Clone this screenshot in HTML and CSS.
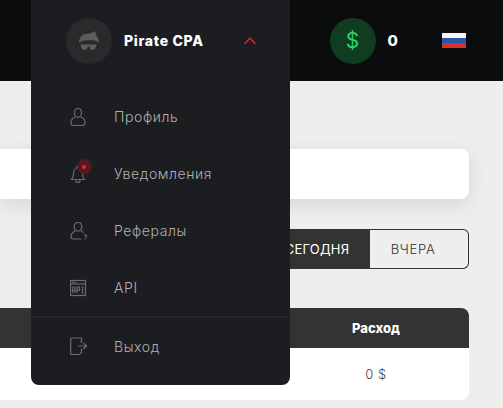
FILE: index.html
```html
<!DOCTYPE html>
<html lang="en">
<head>
    <meta charset="UTF-8">
    <meta name="viewport" content="width=device-width, initial-scale=1.0">
    <title>Pirate CPA</title>
    <link rel="stylesheet" href="styles.css">
</head>
<body>
    <header class="topbar">
        <div class="balance">
            <div class="balance-icon">$</div>
            <span class="balance-value">0</span>
        </div>
        <div class="flag">
            <span class="flag-white"></span>
            <span class="flag-blue"></span>
            <span class="flag-red"></span>
        </div>
    </header>

    <div class="user-menu">
        <div class="user-head">
            <div class="avatar">
                <svg width="24" height="22" viewBox="0 0 24 22">
                    <path fill="#5c5c5e" d="M2 13C2 7 5 4.500 9 4C13 3.500 16 3 18 1C18.500 3 19 4 19 5C21 7 22 10 22 13C21 12 20 10.800 18 10.500C14 10 9 10 6 10.800C4 11.300 3 12 2 13Z"/>
                    <path fill="#5c5c5e" d="M3.500 14.500H19.500V15.500H18.800A3.300 3.300 0 1 1 12.400 16.500H10.600A3.300 3.300 0 1 1 4.200 15.500H3.500Z"/>
                </svg>
            </div>
            <span class="user-name">Pirate CPA</span>
            <svg class="chevron" width="14" height="9" viewBox="0 0 14 9">
                <path fill="none" stroke="#e0262b" stroke-width="1.500" d="M1.500 8L7 2L12.500 8"/>
            </svg>
        </div>

        <ul class="menu-list">
            <li class="menu-item">
                <svg class="menu-icon" width="18" height="20" viewBox="0 0 18 20">
                    <path d="M8 1.500C6 1.500 4.500 3.300 4.500 5.800C4.500 8.300 6 10.300 8 10.300C10 10.300 11.500 8.300 11.500 5.800C11.500 3.300 10 1.500 8 1.500Z"/>
                    <path d="M5.500 10C2.500 11 1 13 1 15.500C1 17.500 2 18.500 3.500 18.500H12.500C14 18.500 15 17.500 15 15.500C15 13 13.500 11 10.500 10"/>
                </svg>
                Профиль
            </li>
            <li class="menu-item">
                <span class="bell-wrap">
                    <svg class="menu-icon" width="18" height="20" viewBox="0 0 18 20">
                        <path d="M1.500 15.500C3 14 3.500 12 3.500 9C3.500 6 5.500 4 8 4C10.500 4 12.500 6 12.500 9C12.500 12 13 14 14.500 15.500Z"/>
                        <path d="M6.500 4C6.500 2.500 7 2 8 2C9 2 9.500 2.500 9.500 4"/>
                        <path d="M6 15.500V16.500C6 17.800 7 18.500 8 18.500C9 18.500 10 17.800 10 16.500V15.500"/>
                    </svg>
                    <span class="bell-badge"></span>
                </span>
                Уведомления
            </li>
            <li class="menu-item">
                <svg class="menu-icon" width="18" height="20" viewBox="0 0 18 20">
                    <path d="M8 1.500C5.800 1.500 4.200 3.300 4.200 5.800C4.200 8.200 5.800 10 8 10C10.200 10 11.800 8.200 11.800 5.800C11.800 3.300 10.200 1.500 8 1.500Z"/>
                    <path d="M5.500 10C2.800 11 1 13 1 15.500C1 17 1.800 18 3.200 18H11.500"/>
                    <path d="M11 10C12 10.500 13 11 13.500 11.800"/>
                    <path d="M14 14.200C14.500 13.500 16.500 13.600 16.500 14.800C16.500 15.800 15.300 15.800 15.300 17"/>
                    <path d="M15.300 17.800V18.800"/>
                </svg>
                Рефералы
            </li>
            <li class="menu-item">
                <svg class="menu-icon" width="18" height="18" viewBox="0 0 18 18">
                    <rect x="0.500" y="1.500" width="15" height="15"/>
                    <path d="M0.500 5H15.500"/>
                    <path d="M2 3.300H3.500M4.500 3.300H6"/>
                    <path d="M2.500 14V8.500C2.500 7.800 5 7.800 5 8.500V14M2.500 11.500H5"/>
                    <path d="M7 14V8H9.500V11.200H7"/>
                    <path d="M11.500 8H13.500M12.500 8V14M11.500 14H13.500"/>
                </svg>
                API
            </li>
            <li class="menu-item menu-item-last">
                <svg class="menu-icon" width="18" height="19" viewBox="0 0 18 19">
                    <path d="M0.700 1H11.500V6M0.700 1V17.500H9.500L11.500 15.500V11.500M0.700 1"/>
                    <path d="M8 9H16.500M13.500 6L16.500 9L13.500 12"/>
                </svg>
                Выход
            </li>
        </ul>
    </div>

    <main class="content">
        <div class="card"></div>

        <div class="tabs">
            <button class="tab tab-active">СЕГОДНЯ</button>
            <button class="tab">ВЧЕРА</button>
        </div>

        <div class="stats">
            <div class="stats-head">
                <span></span>
                <span class="stats-title">Расход</span>
            </div>
            <div class="stats-row">
                <span></span>
                <span class="stats-value">0 $</span>
            </div>
        </div>
    </main>
</body>
</html>
```

FILE: styles.css
```css
body {
    font-family: Inter, "Noto Sans", Arial, sans-serif;
    background-color: #eee;
    margin: 0;
    height: 100vh;
    overflow: hidden;
    position: relative;
}

.topbar {
    height: 81px;
    background-color: #0a0c0e;
    display: flex;
    justify-content: flex-end;
    align-items: center;
    padding-right: 37px;
}

.balance {
    display: flex;
    align-items: center;
    gap: 12px;
    margin-right: 44px;
}

.balance-icon {
    width: 46px;
    height: 46px;
    border-radius: 50%;
    background-color: #103c20;
    color: #2bd46f;
    font-size: 21px;
    font-weight: 400;
    display: flex;
    justify-content: center;
    align-items: center;
}

.balance-value {
    color: #fff;
    font-size: 15px;
    font-weight: 800;
}

.flag {
    width: 24px;
    display: flex;
    flex-direction: column;
}

.flag span {
    height: 5px;
}

.flag-white {
    background-color: #f4f4f4;
}

.flag-blue {
    background-color: #2a55a5;
}

.flag-red {
    background-color: #d8302c;
}

.user-menu {
    position: absolute;
    top: 0;
    left: 31px;
    width: 259px;
    height: 385px;
    background-color: #1c1d21;
    border-radius: 0 0 8px 8px;
}

.user-head {
    height: 81px;
    display: flex;
    align-items: center;
    padding-left: 35px;
}

.avatar {
    width: 46px;
    height: 46px;
    border-radius: 50%;
    background-color: #2a2a2c;
    display: flex;
    justify-content: center;
    align-items: center;
}

.user-name {
    color: #fff;
    font-size: 14px;
    font-weight: 800;
    letter-spacing: 0.7px;
    margin-left: 12px;
    width: 119px;
}

.menu-list {
    list-style: none;
    margin: 7px 0 0;
    padding: 0;
}

.menu-item {
    height: 57px;
    display: flex;
    align-items: center;
    padding-left: 40px;
    color: #b0b0b0;
    font-size: 14px;
    font-weight: 300;
    letter-spacing: 0.6px;
    position: relative;
}

.menu-item-last {
    border-top: 2px solid #27282c;
    height: 56px;
}

.menu-icon {
    width: 18px;
    margin-right: 25px;
    margin-left: -1px;
    padding-right: 1px;
    box-sizing: content-box;
    fill: none;
    stroke: #6b6b6d;
    stroke-width: 1.200;
    flex-shrink: 0;
}

.bell-wrap {
    display: flex;
    position: relative;
}

.bell-badge {
    position: absolute;
    top: -5px;
    left: 6px;
    width: 15px;
    height: 15px;
    border-radius: 50%;
    background-color: #541a20;
}

.bell-badge::after {
    content: "";
    position: absolute;
    top: 6px;
    left: 5px;
    width: 4px;
    height: 4px;
    border-radius: 50%;
    background-color: #f0242c;
}

.content {
    padding: 68px 34px 0 0;
}

.card {
    height: 50px;
    background-color: #fff;
    border-radius: 0 8px 8px 0;
    box-shadow: 0 5px 20px rgba(0, 0, 0, 0.1);
}

.tabs {
    display: flex;
    justify-content: flex-end;
    margin-top: 30px;
}

.tab {
    width: 99px;
    height: 40px;
    padding: 0 12px 0 0;
    font-family: inherit;
    font-size: 13px;
    font-weight: 300;
    letter-spacing: 0.7px;
    color: #333;
    background-color: #eee;
    border: 1px solid #333;
    border-left: none;
    border-radius: 0 6px 6px 0;
}

.tab-active {
    width: 105px;
    padding: 0;
    font-weight: 400;
    letter-spacing: 0.2px;
    color: #fff;
    background-color: #333;
    border-radius: 6px 0 0 6px;
}

.stats {
    margin-top: 39px;
}

.stats-head,
.stats-row {
    display: grid;
    grid-template-columns: 1fr 186px;
    text-align: center;
}

.stats-head {
    height: 40px;
    align-items: center;
    background-color: #333;
    border-radius: 0 8px 0 0;
}

.stats-title {
    color: #fff;
    font-size: 13px;
    font-weight: 800;
}

.stats-row {
    height: 52px;
    align-items: center;
    background-color: #fff;
    border-radius: 0 0 8px 0;
}

.stats-value {
    color: #444;
    font-size: 13px;
    font-weight: 300;
    letter-spacing: 0.5px;
}
```
